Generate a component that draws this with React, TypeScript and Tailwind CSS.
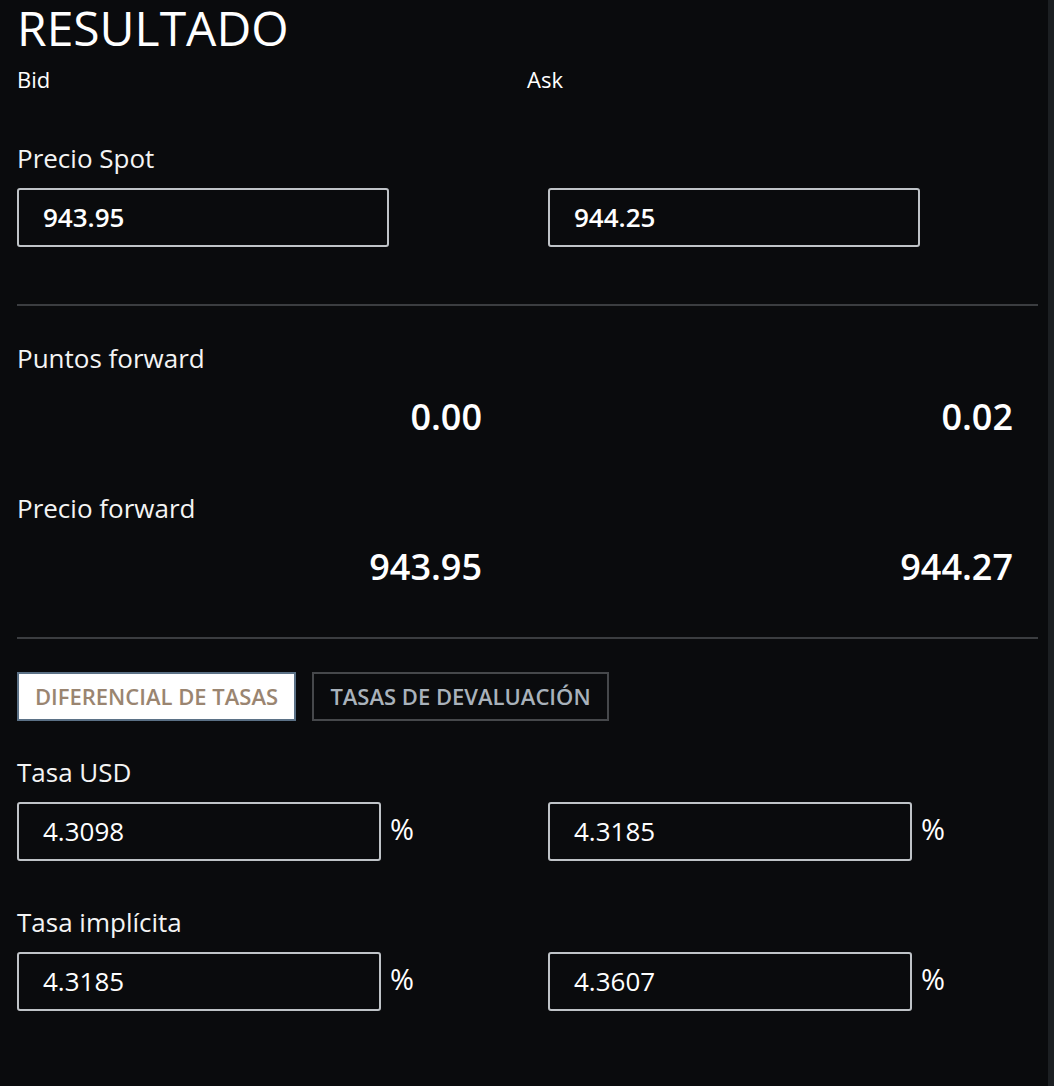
import React from 'react';

const font = { fontFamily: '"Open Sans", "Noto Sans", sans-serif' };

const Label: React.FC<{ text: string; className?: string }> = ({ text, className = '' }) => (
  <div className={`text-[26px] leading-[32px] text-[#f4f4f4] ${className}`}>{text}</div>
);

const Box: React.FC<{ value: string; width: string; bold?: boolean }> = ({ value, width, bold }) => (
  <div
    className={`${width} h-[59px] shrink-0 rounded-[3px] border-2 border-[#bfc3c7] bg-[#0a0b0d] pl-[24px] flex items-center text-[26px] text-white ${
      bold ? 'font-semibold' : 'font-normal'
    }`}
  >
    {value}
  </div>
);

const RateRow: React.FC<{ bid: string; ask: string }> = ({ bid, ask }) => (
  <div className="flex items-center">
    <Box value={bid} width="w-[364px]" />
    <span className="ml-[9px] mb-[5px] text-[29px] text-white w-[158px]">%</span>
    <Box value={ask} width="w-[364px]" />
    <span className="ml-[9px] mb-[5px] text-[29px] text-white">%</span>
  </div>
);

const ValueRow: React.FC<{ bid: string; ask: string }> = ({ bid, ask }) => (
  <div className="flex text-[36px] leading-[44px] font-semibold text-white">
    <div className="w-[465px] text-right">{bid}</div>
    <div className="w-[531px] text-right">{ask}</div>
  </div>
);

export default function App() {
  return (
    <div className="flex h-[1086px] w-full bg-[#0a0b0d] overflow-hidden" style={font}>
      <div className="flex-1 pl-[17px] pr-[10px]">
        <h1 className="text-[48px] leading-[56px] font-normal text-white">RESULTADO</h1>

        <div className="flex text-[22px] leading-[46px] text-white">
          <div className="w-[510px]">Bid</div>
          <div>Ask</div>
        </div>

        <Label text="Precio Spot" className="mt-[40px]" />
        <div className="mt-[14px] flex">
          <Box value="943.95" width="w-[372px]" bold />
          <div className="w-[159px] shrink-0" />
          <Box value="944.25" width="w-[372px]" bold />
        </div>

        <div className="mt-[57px] h-[2px] w-[1021px] bg-[#3b3d40]" />

        <Label text="Puntos forward" className="mt-[36px]" />
        <div className="mt-[21px]">
          <ValueRow bid="0.00" ask="0.02" />
        </div>

        <Label text="Precio forward" className="mt-[53px]" />
        <div className="mt-[21px]">
          <ValueRow bid="943.95" ask="944.27" />
        </div>

        <div className="mt-[48px] h-[2px] w-[1021px] bg-[#3b3d40]" />

        <div className="mt-[33px] flex gap-[16px]">
          <button className="h-[49px] w-[279px] border-2 border-[#5b7186] bg-white text-[22px] font-semibold text-[#9a8571]">
            DIFERENCIAL DE TASAS
          </button>
          <button className="h-[49px] w-[297px] border-2 border-[#46484b] bg-transparent text-[22px] font-semibold text-[#a9b2bb]">
            TASAS DE DEVALUACIÓN
          </button>
        </div>

        <Label text="Tasa USD" className="mt-[35px]" />
        <div className="mt-[14px]">
          <RateRow bid="4.3098" ask="4.3185" />
        </div>

        <Label text="Tasa implícita" className="mt-[45px]" />
        <div className="mt-[14px]">
          <RateRow bid="4.3185" ask="4.3607" />
        </div>
      </div>
      <div className="w-[6px] h-full bg-[#1c1f22]" />
    </div>
  );
}
